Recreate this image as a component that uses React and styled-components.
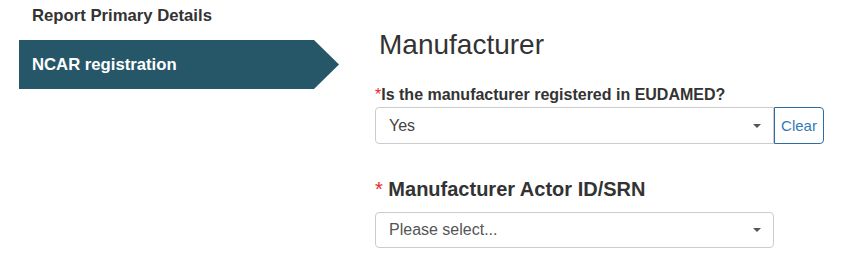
import React from "react";
import styled, { createGlobalStyle } from "styled-components";

const Global = createGlobalStyle`
  html, body { margin: 0; padding: 0; background: #fff; }
  body { font-family: "Liberation Sans", Arial, sans-serif; color: #333; }
`;

const Page = styled.div`
  display: flex;
  align-items: flex-start;
  width: 846px;
  height: 264px;
  overflow: hidden;
`;

const Sidebar = styled.nav`
  display: flex;
  flex-direction: column;
  width: 320px;
  margin-left: 19px;
`;

const SideItem = styled.div`
  padding: 5px 0 0 13px;
  height: 40px;
  box-sizing: border-box;
  font-size: 16.7px;
  line-height: 22px;
  font-weight: 700;
  color: #333;
`;

const ActiveItem = styled.div`
  display: flex;
  align-items: center;
  height: 49px;
  padding-left: 13px;
  background: #255769;
  color: #fff;
  font-size: 16.7px;
  font-weight: 700;
  clip-path: polygon(0 0, 295px 0, 100% 50%, 295px 100%, 0 100%);
`;

const Main = styled.main`
  display: flex;
  flex-direction: column;
  margin-left: 36px;
  padding-top: 29px;
`;

const Title = styled.h2`
  margin: 0 0 0 4px;
  font-size: 28px;
  line-height: 31px;
  font-weight: 400;
  color: #333;
`;

const Label = styled.label`
  display: block;
  margin-top: ${(p) => p.$top}px;
  font-size: ${(p) => p.$size}px;
  line-height: ${(p) => p.$lh}px;
  font-weight: 700;
  color: #333;
`;

const Req = styled.span`
  color: #e8262a;
  font-weight: 400;
`;

const Row = styled.div`
  display: flex;
  margin-top: ${(p) => p.$top}px;
`;

const Select = styled.div`
  display: flex;
  align-items: center;
  justify-content: space-between;
  box-sizing: border-box;
  width: 399px;
  height: ${(p) => p.$h}px;
  padding: 0 12px 0 13px;
  border: 1px solid #ccc;
  border-radius: ${(p) => (p.$joined ? "4px 0 0 4px" : "4px")};
  font-size: 16px;
  color: ${(p) => (p.$placeholder ? "#555" : "#444")};
  background: #fff;
`;

const Caret = styled.span`
  width: 0;
  height: 0;
  border-left: 4px solid transparent;
  border-right: 4px solid transparent;
  border-top: 4px solid #555;
`;

const ClearButton = styled.button`
  box-sizing: border-box;
  width: 50px;
  height: 37px;
  padding: 0;
  border: 1px solid #2e6da4;
  border-radius: 0 4px 4px 0;
  background: #fff;
  color: #337ab7;
  font-family: "Liberation Sans", Arial, sans-serif;
  font-size: 15px;
  cursor: pointer;
`;

export default function App() {
  return (
    <>
      <Global />
      <Page>
        <Sidebar>
          <SideItem>Report Primary Details</SideItem>
          <ActiveItem>NCAR registration</ActiveItem>
        </Sidebar>
        <Main>
          <Title>Manufacturer</Title>
          <Label $top={25} $size={16} $lh={20}>
            <Req>*</Req>Is the manufacturer registered in EUDAMED?
          </Label>
          <Row $top={2}>
            <Select $h={37} $joined>
              <span>Yes</span>
              <Caret />
            </Select>
            <ClearButton>Clear</ClearButton>
          </Row>
          <Label $top={33} $size={20} $lh={24}>
            <Req>*</Req> Manufacturer Actor ID/SRN
          </Label>
          <Row $top={11}>
            <Select $h={36} $placeholder>
              <span>Please select...</span>
              <Caret />
            </Select>
          </Row>
        </Main>
      </Page>
    </>
  );
}
